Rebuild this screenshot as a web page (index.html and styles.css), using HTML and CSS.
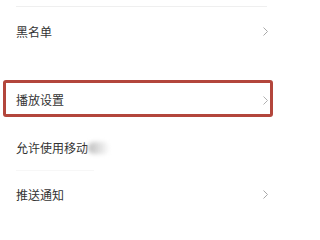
FILE: index.html
```html
<!DOCTYPE html>
<html lang="zh">
<head>
<meta charset="utf-8">
<link rel="stylesheet" href="styles.css">
</head>
<body>
<div class="page">
  <div class="divider top"></div>
  <div class="row r1">
    <span class="label">黑名单</span>
    <svg class="chev" width="5" height="9" viewBox="0 0 5 9"><polyline points="0.5,0.5 4.5,4.5 0.5,8.5" fill="none" stroke="#a8a8a8" stroke-width="1"/></svg>
  </div>
  <div class="highlight">
    <div class="row r2">
      <span class="label">播放设置</span>
      <svg class="chev" width="5" height="9" viewBox="0 0 5 9"><polyline points="0.5,0.5 4.5,4.5 0.5,8.5" fill="none" stroke="#b0b0b0" stroke-width="1"/></svg>
    </div>
  </div>
  <div class="row r3">
    <span class="label">允许使用移动</span><span class="smudge"></span>
  </div>
  <div class="divider mid"></div>
  <div class="row r4">
    <span class="label">推送通知</span>
    <svg class="chev" width="5" height="9" viewBox="0 0 5 9"><polyline points="0.5,0.5 4.5,4.5 0.5,8.5" fill="none" stroke="#a8a8a8" stroke-width="1"/></svg>
  </div>
</div>
</body>
</html>
```

FILE: styles.css
```css
html, body {
  margin: 0;
  padding: 0;
  background: #ffffff;
}
.page {
  width: 279px;
  height: 203px;
  overflow: hidden;
  padding-top: 6px;
  box-sizing: border-box;
  font-family: "Noto Sans CJK SC", "Noto Sans", sans-serif;
  font-size: 12px;
  color: #333333;
}
.divider {
  height: 1px;
  background: #efefef;
}
.divider.top {
  margin: 0 12px 0 16px;
}
.divider.mid {
  margin: 0 185px 0 16px;
  background: #f7f7f7;
}
.row {
  display: flex;
  align-items: center;
  justify-content: space-between;
  padding: 0 11px 0 16px;
}
.label {
  line-height: 14px;
}
.chev {
  display: block;
}
.r1 {
  height: 49px;
}
.highlight {
  margin: 24px 6px 0 3px;
  border: 3px solid #b3463c;
  border-radius: 3px;
  padding-top: 3px;
  height: 28px;
}
.r2 {
  height: 28px;
  padding: 0 2px 0 10px;
}
.r3 {
  margin-top: 9px;
  height: 44px;
  justify-content: flex-start;
}
.smudge {
  width: 22px;
  height: 12px;
  margin-left: 0;
  background: linear-gradient(to right, #bdbdbd, rgba(220,220,220,0));
  filter: blur(2px);
  border-radius: 6px;
}
.r4 {
  height: 47px;
}
```
